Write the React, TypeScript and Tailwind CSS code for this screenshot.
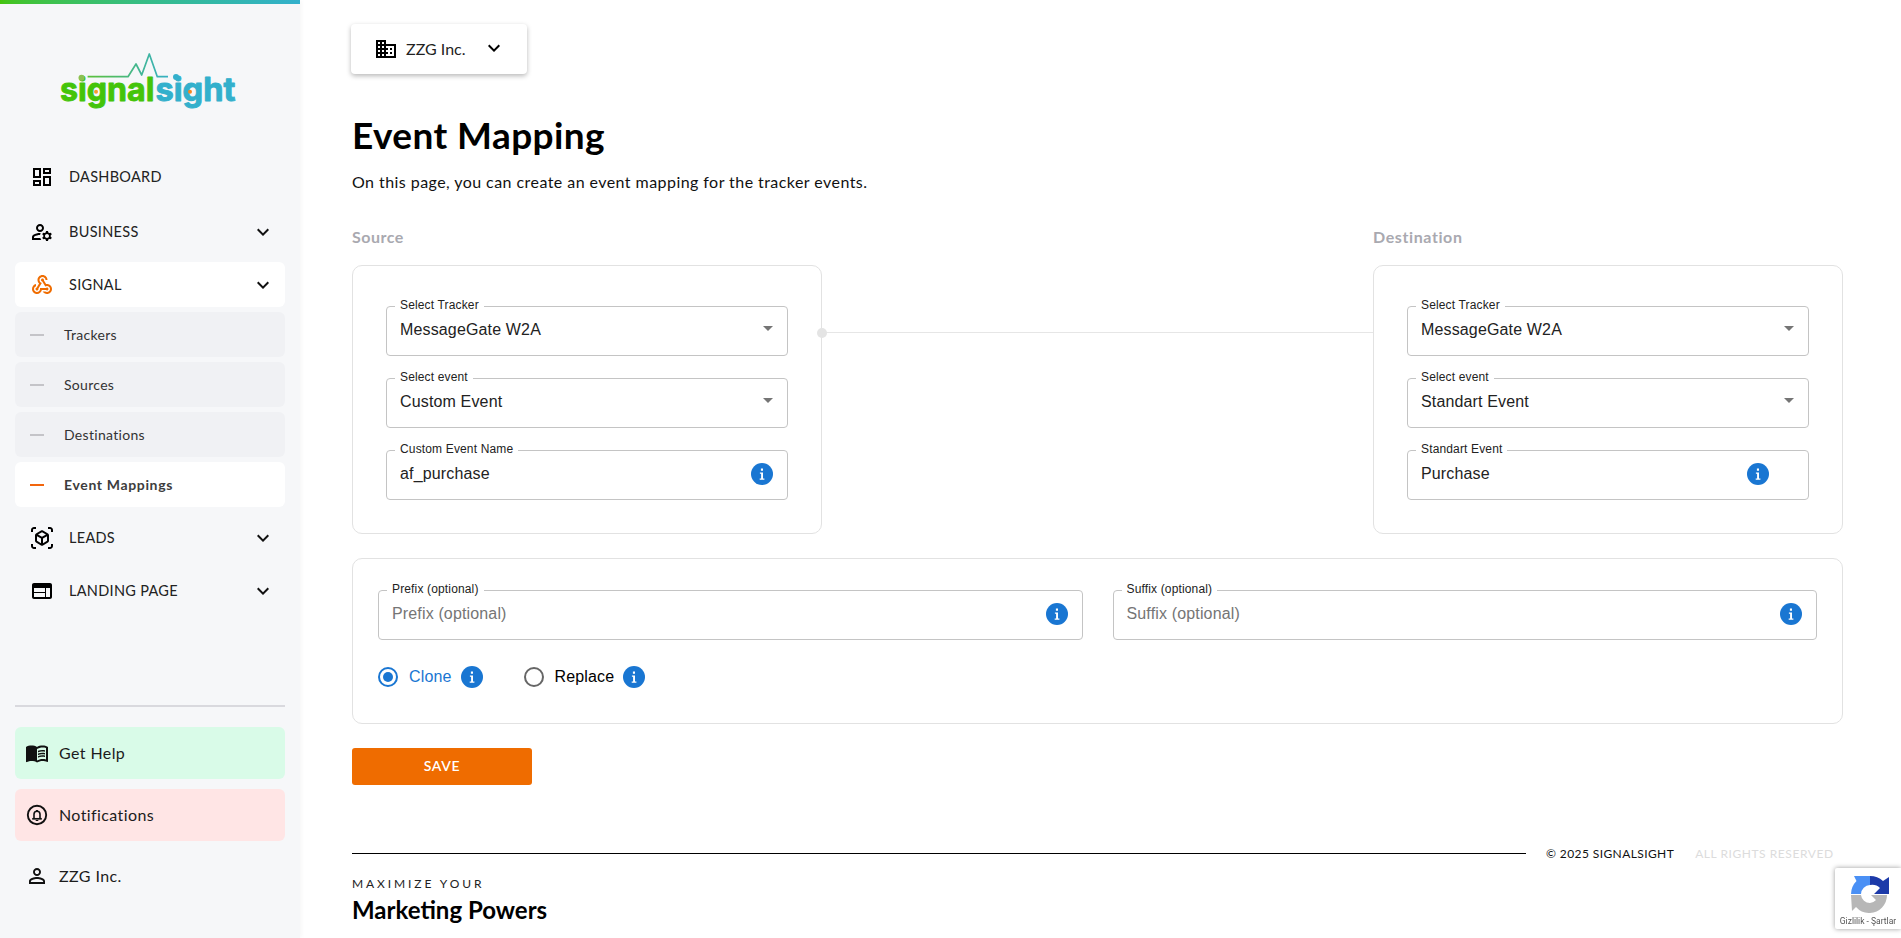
import React from "react";

const P = {
  dashboard: "M19 5v2h-4V5h4M9 5v6H5V5h4m10 8v6h-4v-6h4M9 17v2H5v-2h4M21 3h-8v6h8V3zM11 3H3v10h8V3zm10 8h-8v10h8V11zm-10 4H3v6h8v-6z",
  manage: "M4 18v-.65c0-.34.16-.66.41-.81C6.1 15.53 8.03 15 10 15c.03 0 .05 0 .08.01.1-.7.3-1.37.59-1.98-.22-.02-.44-.03-.67-.03-2.42 0-4.68.67-6.61 1.82-.88.52-1.39 1.5-1.39 2.53V20h9.26c-.42-.6-.75-1.28-.97-2H4zm6-6c2.21 0 4-1.79 4-4s-1.79-4-4-4-4 1.79-4 4 1.79 4 4 4zm0-6c1.1 0 2 .9 2 2s-.9 2-2 2-2-.9-2-2 .9-2 2-2zm10.75 10c0-.22-.03-.42-.06-.63l1.14-1.01-1-1.73-1.45.49c-.32-.27-.68-.48-1.08-.63L18 11h-2l-.3 1.49c-.4.15-.76.36-1.08.63l-1.45-.49-1 1.73 1.14 1.01c-.03.21-.06.41-.06.63s.03.42.06.63l-1.14 1.01 1 1.73 1.45-.49c.32.27.68.48 1.08.63L16 21h2l.3-1.49c.4-.15.76-.36 1.08-.63l1.45.49 1-1.73-1.14-1.01c.03-.21.06-.41.06-.63zM17 18c-1.1 0-2-.9-2-2s.9-2 2-2 2 .9 2 2-.9 2-2 2z",
  webhook: "M10 15h5.88c.27-.31.67-.5 1.12-.5.83 0 1.5.67 1.5 1.5s-.67 1.5-1.5 1.5c-.44 0-.84-.19-1.12-.5H11.9c-.46 2.28-2.48 4-4.9 4-2.76 0-5-2.24-5-5 0-2.42 1.72-4.44 4-4.9v2.07c-1.16.41-2 1.53-2 2.83 0 1.65 1.35 3 3 3s3-1.35 3-3v-1zm2.5-11c1.65 0 3 1.35 3 3h2c0-2.76-2.24-5-5-5s-5 2.24-5 5c0 1.43.6 2.71 1.55 3.62l-2.35 3.9c-.68.14-1.2.75-1.2 1.48 0 .83.67 1.5 1.5 1.5s1.5-.67 1.5-1.5c0-.16-.02-.31-.07-.45l3.38-5.63C10.49 9.61 9.5 8.42 9.5 7c0-1.65 1.35-3 3-3zm4.5 9c-.64 0-1.23.2-1.72.54l-3.05-5.07C11.53 8.35 11 7.74 11 7c0-.83.67-1.5 1.5-1.5S14 6.17 14 7c0 .15-.02.29-.06.43l2.19 3.65c.28-.05.57-.08.87-.08 2.76 0 5 2.24 5 5s-2.24 5-5 5c-1.85 0-3.47-1.01-4.33-2.5h2.67c.48.32 1.05.5 1.66.5 1.65 0 3-1.35 3-3s-1.35-3-3-3z",
  viewar: "M3 4c0-.55.45-1 1-1h2V1H4C2.34 1 1 2.34 1 4v2h2V4zm0 16v-2H1v2c0 1.66 1.34 3 3 3h2v-2H4c-.55 0-1-.45-1-1zM20 1h-2v2h2c.55 0 1 .45 1 1v2h2V4c0-1.66-1.34-3-3-3zm1 19c0 .55-.45 1-1 1h-2v2h2c1.66 0 3-1.34 3-3v-2h-2v2zm-2-5.13V9.13c0-.72-.38-1.38-1-1.73l-5-2.88c-.31-.18-.65-.27-1-.27s-.69.09-1 .27L6 7.39c-.62.36-1 1.02-1 1.74v5.74c0 .72.38 1.38 1 1.73l5 2.88c.31.18.65.27 1 .27s.69-.09 1-.27l5-2.88c.62-.35 1-1.01 1-1.73zm-8 2.3-4-2.3v-4.63l4 2.33v4.6zm1-6.33L8.04 8.53 12 6.25l3.96 2.28L12 10.84zm5 4.03-4 2.3v-4.6l4-2.33v4.63z",
  web: "M20 4H4c-1.1 0-1.99.9-1.99 2L2 18c0 1.1.9 2 2 2h16c1.1 0 2-.9 2-2V6c0-1.1-.9-2-2-2zm-5 14H4v-4h11v4zm0-5H4V9h11v4zm5 5h-4V9h4v9z",
  book: "M21 5c-1.11-.35-2.33-.5-3.5-.5-1.95 0-4.05.4-5.5 1.5-1.45-1.1-3.55-1.5-5.5-1.5S2.45 4.9 1 6v14.65c0 .25.25.5.5.5.1 0 .15-.05.25-.05C3.1 20.45 5.05 20 6.5 20c1.95 0 4.05.4 5.5 1.5 1.35-.85 3.8-1.5 5.5-1.5 1.65 0 3.35.3 4.75 1.05.1.05.15.05.25.05.25 0 .5-.25.5-.5V6c-.6-.45-1.25-.75-2-1zm0 13.5c-1.1-.35-2.3-.5-3.5-.5-1.7 0-4.15.65-5.5 1.5V8c1.35-.85 3.8-1.5 5.5-1.5 1.2 0 2.4.15 3.5.5v11.5zM17.5 10.5c.88 0 1.73.09 2.5.26V9.24c-.79-.15-1.64-.24-2.5-.24-1.7 0-3.24.29-4.5.83v1.66c1.13-.64 2.7-.99 4.5-.99zM13 12.49v1.66c1.13-.64 2.7-.99 4.5-.99.88 0 1.73.09 2.5.26V11.9c-.79-.15-1.64-.24-2.5-.24-1.7 0-3.24.3-4.5.83zM17.5 14.33c-1.7 0-3.24.29-4.5.83v1.66c1.13-.64 2.7-.99 4.5-.99.88 0 1.73.09 2.5.26v-1.52c-.79-.16-1.64-.24-2.5-.24z",
  person: "M12 5.9c1.16 0 2.1.94 2.1 2.1s-.94 2.1-2.1 2.1S9.9 9.16 9.9 8s.94-2.1 2.1-2.1m0 9c2.97 0 6.1 1.46 6.1 2.1v1.1H5.9V17c0-.64 3.13-2.1 6.1-2.1M12 4C9.79 4 8 5.79 8 8s1.79 4 4 4 4-1.79 4-4-1.79-4-4-4zm0 9c-2.67 0-8 1.34-8 4v3h16v-3c0-2.66-5.33-4-8-4z",
  domain: "M12 7V3H2v18h20V7H12zM6 19H4v-2h2v2zm0-4H4v-2h2v2zm0-4H4V9h2v2zm0-4H4V5h2v2zm4 12H8v-2h2v2zm0-4H8v-2h2v2zm0-4H8V9h2v2zm0-4H8V5h2v2zm10 12h-8v-2h2v-2h-2v-2h2v-2h-2V9h8v10zm-2-8h-2v2h2v-2zm0 4h-2v2h2v-2z",
  chevron: "M16.59 8.59 12 13.17 7.41 8.59 6 10l6 6 6-6z",
  caret: "M7 10l5 5 5-5z",
};

function Icon({ d, className = "" }: { d: string; className?: string }) {
  return (
    <svg viewBox="0 0 24 24" className={`w-6 h-6 shrink-0 fill-current ${className}`}>
      <path d={d} />
    </svg>
  );
}

function InfoDot({ className = "" }: { className?: string }) {
  return (
    <svg viewBox="0 0 22 22" className={`w-[22px] h-[22px] shrink-0 ${className}`}>
      <circle cx="11" cy="11" r="11" fill="#1976d2" />
      <path d="M9.9 5.6h2.1v2.1H9.9zM8.9 9.5h3.1v5.9h1.4v1.3H8.7v-1.3h1.4v-4.6H8.9z" fill="#fff" />
    </svg>
  );
}

function BellIcon() {
  return (
    <svg viewBox="0 0 24 24" className="w-6 h-6 shrink-0">
      <circle cx="12" cy="12" r="9.2" fill="none" stroke="#111" strokeWidth="1.9" />
      <path d="M9 15.2v-3.9c0-1.8 1.2-3.1 3-3.1s3 1.3 3 3.1v3.9" fill="none" stroke="#111" strokeWidth="1.6" />
      <path d="M7.2 15.8h9.6" stroke="#111" strokeWidth="1.7" />
      <path d="M11 7h2v1.4h-2zM10.7 17h2.6v1h-2.6z" fill="#111" />
    </svg>
  );
}

function Logo() {
  return (
    <svg viewBox="0 0 180 60" className="w-[180px] h-[60px] ml-[59px] mt-[48px] overflow-visible">
      <defs>
        <linearGradient id="pulse" x1="0" y1="0" x2="1" y2="0">
          <stop offset="0" stopColor="#5cc13a" />
          <stop offset="1" stopColor="#35b0c4" />
        </linearGradient>
      </defs>
      <path
        d="M28.6 24.7H69L77 12l5.7 11L90.3 2l8 22.7H109"
        fill="none"
        stroke="url(#pulse)"
        strokeWidth="1.7"
        strokeLinejoin="round"
      />
      <text
        x="1"
        y="49"
        textLength="94.5"
        lengthAdjust="spacingAndGlyphs"
        fontFamily="'Inter', sans-serif"
        fontWeight="700"
        fontSize="33"
        fill="#44c40a"
        stroke="#44c40a"
        strokeWidth="0.9"
        strokeLinejoin="round"
      >
        signal
      </text>
      <text
        x="96.5"
        y="49"
        textLength="80"
        lengthAdjust="spacingAndGlyphs"
        fontFamily="'Inter', sans-serif"
        fontWeight="700"
        fontSize="33"
        fill="#33b0cc"
        stroke="#33b0cc"
        strokeWidth="0.9"
        strokeLinejoin="round"
      >
        sight
      </text>
      <circle cx="22.5" cy="25.7" r="3" fill="#8cc152" />
      <circle cx="117" cy="25" r="3" fill="#33b0cc" />
      <circle cx="37" cy="39.7" r="2" fill="#f79a2e" />
      <circle cx="131" cy="39.7" r="2" fill="#f7861e" />
    </svg>
  );
}

function NavItem({
  d,
  label,
  expand,
  active,
  className = "",
}: {
  d: string;
  label: string;
  expand?: boolean;
  active?: boolean;
  className?: string;
}) {
  return (
    <div
      className={`h-[45px] mx-[15px] pl-[15px] pr-[10px] rounded-[6px] flex items-center gap-[15px] ${
        active ? "bg-white" : ""
      } ${className}`}
    >
      <Icon d={d} className={active ? "text-[#ef6c00]" : "text-black"} />
      <span className="flex-1 text-[14.5px] leading-5 text-[#222] tracking-[0.3px]">{label}</span>
      {expand && <Icon d={P.chevron} className="text-[#111]" />}
    </div>
  );
}

function SubItem({ label, active }: { label: string; active?: boolean }) {
  return (
    <div
      className={`h-[45px] mx-[15px] mt-[5px] pl-[15px] rounded-[6px] flex items-center gap-[20px] ${
        active ? "bg-white" : "bg-[#f0f1f4]"
      }`}
    >
      <span className={`w-[14px] h-[2px] ${active ? "bg-[#f2650d]" : "bg-[#c4c4c8]"}`} />
      <span
        className={`text-[14px] leading-5 ${
          active ? "font-bold text-[#3d3d3d] tracking-[0.65px]" : "text-[#333] tracking-[0.3px]"
        }`}
      >
        {label}
      </span>
    </div>
  );
}

function BottomItem({
  icon,
  label,
  className = "",
}: {
  icon: React.ReactNode;
  label: string;
  className?: string;
}) {
  return (
    <div className={`h-[52px] mx-[15px] pl-[10px] rounded-[6px] flex items-center gap-[10px] ${className}`}>
      {icon}
      <span className="text-[16px] leading-6 text-[#1c1c1c] tracking-[0.4px]">{label}</span>
    </div>
  );
}

function Field({
  label,
  value,
  kind,
  placeholder,
  infoClass = "",
}: {
  label: string;
  value: string;
  kind: "select" | "info";
  placeholder?: boolean;
  infoClass?: string;
}) {
  return (
    <div className="relative h-[50px] border border-[#c4c4c4] rounded-[4px] pl-[13px] pr-[14px] flex items-center font-['Liberation_Sans',sans-serif]">
      <span className="absolute left-[8px] -top-[10px] px-[5px] bg-white text-[12px] leading-4 text-[#222] tracking-[0.15px]">
        {label}
      </span>
      <span
        className={`flex-1 text-[16px] leading-6 tracking-[0.15px] -mt-[3px] ${
          placeholder ? "text-[#757575]" : "text-[#222]"
        }`}
      >
        {value}
      </span>
      {kind === "select" ? (
        <Icon d={P.caret} className="text-[#757575] -mr-[7px] -mt-[6px]" />
      ) : (
        <InfoDot className={`-mt-[2px] ${infoClass}`} />
      )}
    </div>
  );
}

function MapCard({ children }: { children: React.ReactNode }) {
  return (
    <div className="h-[269px] border border-[#e2e2e2] rounded-[10px] pt-[40px] px-[33px] flex flex-col gap-[22px]">
      {children}
    </div>
  );
}

function Recaptcha() {
  return (
    <div className="fixed right-0 bottom-[9px] w-[66px] h-[61px] bg-white rounded-l-[2px] shadow-[0_0_5px_rgba(0,0,0,0.4)] flex flex-col items-center">
      <svg viewBox="0 0 38 38" className="w-[38px] h-[38px] mt-[7px] ml-[4px] shrink-0">
        <path d="M3 1H19V10A9.5 9.5 0 0 0 10 19H0A19 19 0 0 1 5.5 6Z" fill="#4a90f5" />
        <path d="M19 1A19 19 0 0 1 32 6L38 2V19H23L29 13A11 11 0 0 0 19 10Z" fill="#1c3aa9" />
        <path
          d="M0 20H10A9 9 0 0 0 19 28A9 9 0 0 0 25 25L20 20H36A18 18 0 0 1 19 38A18 18 0 0 1 5 32L1 36Z"
          fill="#b7b7b7"
        />
      </svg>
      <span className="mt-[3px] text-[8.5px] leading-[10px] whitespace-nowrap text-[#555] font-['Roboto',sans-serif]">
        Gizlilik - Şartlar
      </span>
    </div>
  );
}

export default function App() {
  return (
    <div className="h-screen w-full flex overflow-hidden bg-white text-black font-['Lato',sans-serif]">
      <aside className="w-[300px] shrink-0 h-full bg-[#f6f7f9] flex flex-col shadow-[2px_0_4px_rgba(0,0,0,0.03)]">
        <div className="h-1 shrink-0 bg-gradient-to-r from-[#44c40a] to-[#33b0cc]" />
        <Logo />
        <NavItem d={P.dashboard} label="DASHBOARD" className="mt-[42px]" />
        <NavItem d={P.manage} label="BUSINESS" expand className="mt-[10px]" />
        <NavItem d={P.webhook} label="SIGNAL" expand active className="mt-[8px]" />
        <SubItem label="Trackers" />
        <SubItem label="Sources" />
        <SubItem label="Destinations" />
        <SubItem label="Event Mappings" active />
        <NavItem d={P.viewar} label="LEADS" expand className="mt-[8px]" />
        <NavItem d={P.web} label="LANDING PAGE" expand className="mt-[8px]" />
        <div className="h-[2px] mx-[15px] mt-[92px] bg-[#d9d9de]" />
        <BottomItem icon={<Icon d={P.book} className="text-[#111]" />} label="Get Help" className="mt-[20px] bg-[#d9fbe8]" />
        <BottomItem icon={<BellIcon />} label="Notifications" className="mt-[10px] bg-[#ffe5e5]" />
        <BottomItem icon={<Icon d={P.person} className="text-[#111]" />} label="ZZG Inc." className="mt-[9px]" />
      </aside>

      <main className="flex-1 min-w-0 pl-[52px] pr-[58px] pt-[24px]">
        <div className="w-[176px] h-[50px] -ml-px rounded-[4px] bg-white shadow-[0_2px_5px_rgba(0,0,0,0.28)] flex items-center pl-[23px]">
          <Icon d={P.domain} className="text-black" />
          <span className="ml-[8px] text-[16px] leading-6 text-[#222]">ZZG Inc.</span>
          <Icon d={P.chevron} className="text-black ml-[16px] -mt-[2px]" />
        </div>

        <h1 className="mt-[39px] text-[37px] leading-[44px] font-bold tracking-[0.4px]">Event Mapping</h1>
        <p className="mt-[13px] text-[16px] leading-6 text-[#111] tracking-[0.44px]">
          On this page, you can create an event mapping for the tracker events.
        </p>

        <div className="flex mt-[31px]">
          <section className="w-[470px] shrink-0">
            <h2 className="text-[16px] leading-6 font-bold text-[#a9a9b0] tracking-[0.5px]">Source</h2>
            <div className="mt-[16px]">
              <MapCard>
                <Field label="Select Tracker" value="MessageGate W2A" kind="select" />
                <Field label="Select event" value="Custom Event" kind="select" />
                <Field label="Custom Event Name" value="af_purchase" kind="info" />
              </MapCard>
            </div>
          </section>
          <div className="relative flex-1 h-px bg-[#e6e6e6] mt-[107px]">
            <span className="absolute -left-[5px] -top-[4.5px] w-[10px] h-[10px] rounded-full bg-[#e4e4e4]" />
          </div>
          <section className="w-[470px] shrink-0">
            <h2 className="text-[16px] leading-6 font-bold text-[#a9a9b0] tracking-[0.6px]">Destination</h2>
            <div className="mt-[16px]">
              <MapCard>
                <Field label="Select Tracker" value="MessageGate W2A" kind="select" />
                <Field label="Select event" value="Standart Event" kind="select" />
                <Field label="Standart Event" value="Purchase" kind="info" infoClass="mr-[25px]" />
              </MapCard>
            </div>
          </section>
        </div>

        <div className="mt-[24px] h-[166px] border border-[#e2e2e2] rounded-[10px] pt-[31px] px-[25px]">
          <div className="flex gap-[30px]">
            <div className="flex-1">
              <Field label="Prefix (optional)" value="Prefix (optional)" kind="info" placeholder />
            </div>
            <div className="flex-1">
              <Field label="Suffix (optional)" value="Suffix (optional)" kind="info" placeholder />
            </div>
          </div>
          <div className="mt-[25px] h-[24px] flex items-center font-['Liberation_Sans',sans-serif] text-[16px] tracking-[0.15px]">
            <span className="w-[20px] h-[20px] rounded-full border-2 border-[#1976d2] flex items-center justify-center">
              <span className="w-[10px] h-[10px] rounded-full bg-[#1976d2]" />
            </span>
            <span className="ml-[11px] text-[#1976d2]">Clone</span>
            <InfoDot className="ml-[9px]" />
            <span className="ml-[41px] w-[20px] h-[20px] rounded-full border-2 border-[#666]" />
            <span className="ml-[11px] text-black">Replace</span>
            <InfoDot className="ml-[9px]" />
          </div>
        </div>

        <button className="mt-[24px] w-[180px] h-[37px] pb-[3px] rounded-[3px] bg-[#ef6c00] text-white text-[14px] font-semibold tracking-[0.7px] flex items-center justify-center">
          SAVE
        </button>

        <div className="mt-[60px] h-[17px] flex items-center">
          <div className="w-[1174px] h-px bg-black" />
          <span className="ml-[20px] text-[12px] leading-[17px] text-[#111] tracking-[0.4px]">© 2025 SIGNALSIGHT</span>
          <span className="ml-[21px] text-[12px] leading-[17px] text-[#dcdcdc] tracking-[0.55px]">ALL RIGHTS RESERVED</span>
        </div>
        <div className="mt-[14px] text-[12px] leading-4 tracking-[2.9px] text-[#222]">MAXIMIZE YOUR</div>
        <div className="mt-[2px] text-[24px] leading-8 font-bold">Marketing Powers</div>
      </main>
      <Recaptcha />
    </div>
  );
}
